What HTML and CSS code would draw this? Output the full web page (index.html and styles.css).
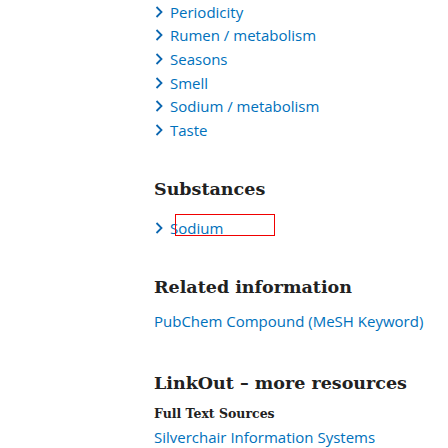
FILE: index.html
```html
<!DOCTYPE html>
<html lang="en">
<head>
<meta charset="utf-8">
<title>MeSH terms</title>
<link rel="stylesheet" href="styles.css">
</head>
<body>
<div class="page">
  <ul class="terms">
    <li><svg class="chev" viewBox="0 0 8 12"><polyline points="1.5,1 6.5,6 1.5,11"/></svg><a href="#">Periodicity</a></li>
    <li><svg class="chev" viewBox="0 0 8 12"><polyline points="1.5,1 6.5,6 1.5,11"/></svg><a href="#">Rumen / metabolism</a></li>
    <li><svg class="chev" viewBox="0 0 8 12"><polyline points="1.5,1 6.5,6 1.5,11"/></svg><a href="#">Seasons</a></li>
    <li><svg class="chev" viewBox="0 0 8 12"><polyline points="1.5,1 6.5,6 1.5,11"/></svg><a href="#">Smell</a></li>
    <li><svg class="chev" viewBox="0 0 8 12"><polyline points="1.5,1 6.5,6 1.5,11"/></svg><a href="#">Sodium / metabolism</a></li>
    <li><svg class="chev" viewBox="0 0 8 12"><polyline points="1.5,1 6.5,6 1.5,11"/></svg><a href="#">Taste</a></li>
  </ul>

  <h2 class="heading substances">Substances</h2>
  <ul class="terms">
    <li class="focus-item"><svg class="chev" viewBox="0 0 8 12"><polyline points="1.5,1 6.5,6 1.5,11"/></svg><a href="#">Sodium</a><span class="focus-box"></span></li>
  </ul>

  <h2 class="heading related">Related information</h2>
  <a class="link" href="#">PubChem Compound (MeSH Keyword)</a>

  <h2 class="heading linkout">LinkOut – more resources</h2>
  <h3 class="subheading">Full Text Sources</h3>
  <a class="link last-link" href="#">Silverchair Information Systems</a>
</div>
</body>
</html>
```

FILE: styles.css
```css
html, body {
  margin: 0;
  padding: 0;
  background: #ffffff;
  overflow: hidden;
}

.page {
  padding-left: 154px;
  font-family: "Open Sans", "Noto Sans", sans-serif;
  font-size: 15px;
  color: #212121;
  display: flex;
  flex-direction: column;
  align-items: flex-start;
}

a {
  color: #0071bc;
  text-decoration: none;
}

.terms {
  list-style: none;
  margin: 0;
  padding: 0;
}

.terms li {
  display: flex;
  align-items: center;
  height: 23.6px;
  position: relative;
}

.chev {
  width: 8px;
  height: 12px;
  margin-right: 7px;
  margin-left: 1px;
  fill: none;
  stroke: #0b66b0;
  stroke-width: 1.8;
}

.heading {
  font-family: "DejaVu Serif", serif;
  font-weight: bold;
  font-size: 17.5px;
  line-height: 24px;
  margin: 0;
  color: #212121;
}

.substances {
  margin-top: 35px;
  margin-bottom: 16px;
}

.related {
  margin-top: 35px;
  margin-bottom: 10px;
}

.linkout {
  margin-top: 38px;
  margin-bottom: 8px;
}

.link {
  line-height: 24px;
}

.last-link {
  line-height: 19px;
  margin-top: 4px;
}

.subheading {
  font-family: "DejaVu Serif", serif;
  font-weight: bold;
  font-size: 12.5px;
  line-height: 21px;
  margin: 0;
}

.focus-box {
  position: absolute;
  left: 21px;
  top: -3px;
  width: 100px;
  height: 22px;
  box-sizing: border-box;
  border: 1.5px solid #f00000;
}
```
